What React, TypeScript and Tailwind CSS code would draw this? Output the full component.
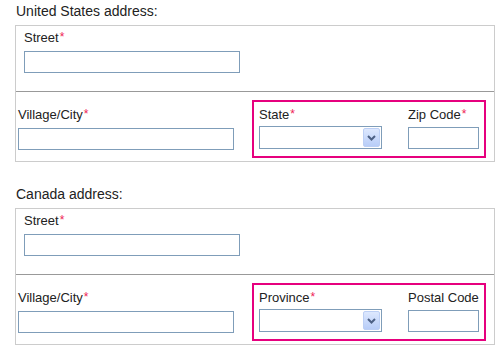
import React from "react";

const Star = () => <span className="text-[#ee2255] text-[12px] relative -top-[1px] ml-[1px]">*</span>;

const TextBox = ({ w }: { w: string }) => (
  <div className={`${w} h-[22px] border border-[#7f9db9] bg-white`} />
);

const Select = () => (
  <div className="w-[123px] h-[23px] border border-[#7f9db9] bg-white flex justify-end items-stretch p-[1px]">
    <div className="w-[17px] rounded-[2px] border border-[#bccff5] bg-gradient-to-b from-[#dde8fe] to-[#b8cdf8] flex items-center justify-center">
      <svg width="9" height="6" viewBox="0 0 9 6">
        <path d="M1 1 L4.5 4.5 L8 1" stroke="#4d6185" strokeWidth="2" fill="none" />
      </svg>
    </div>
  </div>
);

const Section = ({ title, region, postal, postalReq }: { title: string; region: string; postal: string; postalReq: boolean }) => (
  <div className="pl-[15px]">
    <div className="h-[25px] pl-[1px] pt-[3px] text-[14px] leading-[17px] text-[#222]">{title}</div>
    <div className="w-[480px] h-[137px] border border-[#cccccc] flex flex-col">
      <div className="h-[66px] border-b border-[#999999] pl-[8px] pt-[4px]">
        <div className="text-[13px] leading-[16px] text-[#222] h-[21px]">Street<Star /></div>
        <TextBox w="w-[216px]" />
      </div>
      <div className="flex items-start pl-[2px]">
        <div className="w-[234px] pt-[15px]">
          <div className="text-[13px] leading-[16px] text-[#222] h-[21px]">Village/City<Star /></div>
          <TextBox w="w-[216px]" />
        </div>
        <div className="mt-[8px] w-[234px] h-[58px] border-2 border-[#e6007e] flex pl-[5px] pt-[5px]">
          <div className="w-[149px]">
            <div className="text-[13px] leading-[16px] text-[#222] h-[19px]">{region}<Star /></div>
            <Select />
          </div>
          <div>
            <div className="text-[13px] leading-[16px] text-[#222] h-[20px]">{postal}{postalReq && <Star />}</div>
            <TextBox w="w-[71px]" />
          </div>
        </div>
      </div>
    </div>
  </div>
);

export default function App() {
  return (
    <div className="w-[504px] h-[355px] bg-white" style={{ fontFamily: '"Liberation Sans", Arial, sans-serif' }}>
      <Section title="United States address:" region="State" postal="Zip Code" postalReq={true} />
      <div className="h-[21px]" />
      <Section title="Canada address:" region="Province" postal="Postal Code" postalReq={false} />
    </div>
  );
}
